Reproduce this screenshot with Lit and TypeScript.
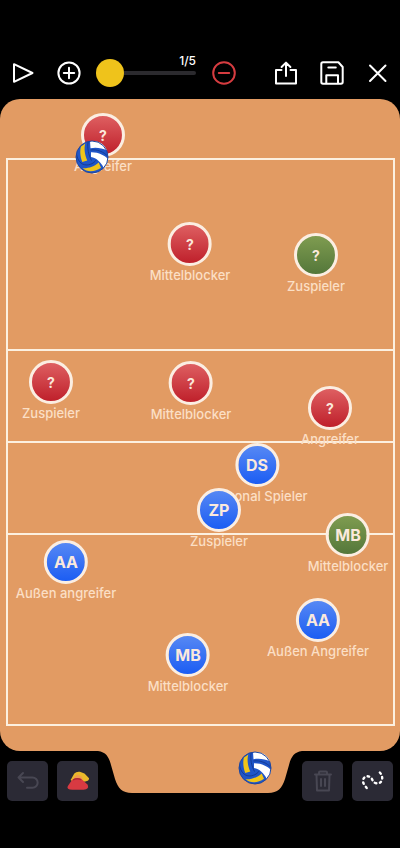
import { LitElement, html, css, svg } from "lit";
import { customElement, state } from "lit/decorators.js";
import { styleMap } from "lit/directives/style-map.js";

type Team = "red" | "green" | "blue";
interface Player { x: number; y: number; team: Team; tag: string; role: string; }

// Positions are given in board units; the board is 400 by 652 units.
const BOARD_W = 400;
const BOARD_H = 652;

const PLAYERS: Player[] = [
  { x: 103, y: 36, team: "red", tag: "?", role: "Angreifer" },
  { x: 190, y: 145, team: "red", tag: "?", role: "Mittelblocker" },
  { x: 316, y: 156, team: "green", tag: "?", role: "Zuspieler" },
  { x: 51, y: 283, team: "red", tag: "?", role: "Zuspieler" },
  { x: 191, y: 284, team: "red", tag: "?", role: "Mittelblocker" },
  { x: 330, y: 309, team: "red", tag: "?", role: "Angreifer" },
  { x: 257, y: 366, team: "blue", tag: "DS", role: "Diagonal Spieler" },
  { x: 219, y: 411, team: "blue", tag: "ZP", role: "Zuspieler" },
  { x: 348, y: 436, team: "green", tag: "MB", role: "Mittelblocker" },
  { x: 66, y: 463, team: "blue", tag: "AA", role: "Außen angreifer" },
  { x: 318, y: 521, team: "blue", tag: "AA", role: "Außen Angreifer" },
  { x: 188, y: 556, team: "blue", tag: "MB", role: "Mittelblocker" },
];

const BALLS = [{ x: 92, y: 58 }, { x: 255, y: 669 }];

const place = (p: { x: number; y: number }) =>
  styleMap({ left: `${(p.x / BOARD_W) * 100}%`, top: `${(p.y / BOARD_H) * 100}%` });

const icons = {
  play: svg`<path d="M3 3.2V20.8L21.5 12Z"/>`,
  add: svg`<circle cx="12" cy="12" r="10.6"/><path d="M12 6.8V17.2M6.8 12H17.2"/>`,
  remove: svg`<circle cx="12" cy="12" r="10.8"/><path d="M6.8 12H17.2"/>`,
  share: svg`<path d="M7.5 9H2V22.5H22V9H16.5M12 15V1.8M7.6 6L12 1.6L16.4 6"/>`,
  save: svg`<path d="M1.3 3Q1.3 1.3 3 1.3H18.4L22.7 6V21Q22.7 22.7 21 22.7H3Q1.3 22.7 1.3 21ZM6.3 22.5V14.2H18V22.5M8.3 6.4H15.8"/>`,
  close: svg`<path d="M4 4.5L19.5 20M19.5 4.5L4 20"/>`,
  undo: svg`<path d="M7 4L2.5 8.5L7 13M2.500 8.500H16.500A5 5 0 0 1 16.500 18.800H11"/>`,
  trash: svg`<path d="M5.500 6L6 21.500H18L18.500 6M4 5.500H20M8 5V3.500Q8 2.500 9 2.500H15Q16 2.500 16 3.500V5M10 10V17M14 10V17"/>`,
  route: svg`<path d="M5.700 19C4 17 2 14.500 2 12C2 8 6 6.500 8.500 7.700C12 9 11 13.500 15 14.200C19.500 15 21.300 12 21.200 9C21.100 6.500 20 4.500 18 2.700"
    stroke-width="2.400" stroke-dasharray="1.500 3.600"/>`,
};

const ball = svg`
  <circle cx="17" cy="17" r="16" fill="#1f55c8"/>
  <path d="M15 1.200C23 0 29.500 4 32 10.500C27 8 21 7 15.500 8.200Z" fill="#fff"/>
  <path d="M16 12.200C23.500 12 30 15.500 33 19C32.600 22.500 31 25.500 28.800 28C26 22 21.500 18 16 17Z" fill="#fff"/>
  <path d="M10.300 3.600C8.900 8 9.600 15 12.300 20.500L7.300 22C5 16.500 4.800 10 6 6.600Z" fill="#f0c419"/>
  <path d="M7.600 28.300C13 28.800 19.500 26.500 23.700 22.600L26 27.800C20.500 31.800 12.500 32.800 7.600 28.300Z" fill="#f0c419"/>
  <path d="M13.200 1.500C12 8 13.500 15 16.500 20.500M1.500 14C2.500 20 5.500 25 12 25C17 24.500 20 22 21 20M15.500 10C22 9 29 12 32.500 16" fill="none" stroke="#143b94" stroke-width="1"/>
  <circle cx="17" cy="17" r="16" fill="none" stroke="#1c469f" stroke-width="1"/>`;

@customElement("app-root")
export class AppRoot extends LitElement {
  @state() private frame = 1;

  static styles = css`
    :host {
      display: flex;
      flex-direction: column;
      min-height: 100vh;
      background: #000;
      color: #fff;
      font-family: Inter, "Liberation Sans", sans-serif;
    }
    button {
      appearance: none;
      border: 0;
      padding: 0;
      margin: 0;
      background: none;
      color: inherit;
      font: inherit;
      cursor: pointer;
    }
    svg { display: block; }
    .line-icon {
      width: 24px;
      height: 24px;
      fill: none;
      stroke: currentColor;
      stroke-width: 2;
      stroke-linecap: round;
      stroke-linejoin: round;
    }
    .toolbar {
      display: flex;
      align-items: center;
      padding: 61px 10px 14px 11px;
    }
    .group { display: flex; gap: 22px; }
    .files { margin-left: 38px; }
    .frames { position: relative; flex: 1; margin: 0 16px 0 15px; height: 24px; }
    .frames-count {
      position: absolute;
      right: 0;
      top: -8px;
      font-size: 12px;
      line-height: 16px;
      font-weight: 500;
    }
    .slider {
      appearance: none;
      display: block;
      width: 100%;
      height: 24px;
      margin: 0;
      background: none;
    }
    .slider::-webkit-slider-runnable-track {
      height: 4px;
      border-radius: 2px;
      background: #2b2a2e;
    }
    .slider::-webkit-slider-thumb {
      appearance: none;
      width: 28px;
      height: 28px;
      margin-top: -12px;
      border-radius: 50%;
      background: #efc31b;
    }
    .danger { color: #d63c40; }
    .board {
      position: relative;
      z-index: 1;
      flex: 1;
      display: flex;
      min-height: 560px;
      border-radius: 20px;
      background: #e29b63;
    }
    .court {
      flex: 1;
      display: grid;
      grid-template-rows: 189fr 92fr 92fr 191fr;
      margin: 59px 5px 25px 6px;
      border: 2px solid #fcf0e0;
    }
    .zone + .zone { border-top: 2px solid #fcf0e0; }
    .player {
      position: absolute;
      display: flex;
      flex-direction: column;
      align-items: center;
      gap: 1px;
      margin-top: -22px;
      transform: translateX(-50%);
      white-space: nowrap;
    }
    .disc {
      box-sizing: border-box;
      display: grid;
      place-items: center;
      width: 44px;
      height: 44px;
      border: 3px solid #fbeee2;
      border-radius: 50%;
      font-size: 16px;
      font-weight: 700;
      color: #fbe9dc;
    }
    .unknown { font-size: 14px; }
    .red { background: linear-gradient(#de5f61, #bf202b); }
    .green { background: linear-gradient(#7f9c50, #54773a); }
    .blue { background: linear-gradient(#5688f4, #1c5df3); }
    .role {
      font-size: 13px;
      line-height: 16px;
      font-weight: 500;
      color: #fbdfc5;
    }
    .ball {
      position: absolute;
      width: 34px;
      height: 34px;
      transform: translate(-50%, -50%);
    }
    .ball svg { width: 34px; height: 34px; }
    .dock {
      display: grid;
      grid-template-columns: 91px 1fr 91px;
      padding: 0 7px;
      height: 97px;
    }
    .tab { width: 100%; height: 42px; fill: #e29b63; }
    .tools {
      display: flex;
      justify-content: space-between;
      align-items: start;
      padding-top: 10px;
    }
    .tool {
      display: grid;
      place-items: center;
      width: 41px;
      height: 40px;
      border-radius: 5px;
      background: #2b2a35;
    }
    .muted { color: #484753; }
    .cones { width: 24px; height: 22px; }
  `;

  private icon(shape: unknown) {
    return html`<svg class="line-icon" viewBox="0 0 24 24" aria-hidden="true">${shape}</svg>`;
  }

  private onFrame(e: Event) {
    this.frame = Number((e.target as HTMLInputElement).value);
  }

  render() {
    return html`
      <header class="toolbar">
        <div class="group">
          <button aria-label="Abspielen">${this.icon(icons.play)}</button>
          <button aria-label="Schritt hinzufügen">${this.icon(icons.add)}</button>
        </div>
        <div class="frames">
          <input class="slider" id="frame" type="range" min="1" max="5" .value=${String(this.frame)}
            aria-label="Schritt" @input=${this.onFrame} />
          <output class="frames-count" for="frame">${this.frame}/5</output>
        </div>
        <button class="danger" aria-label="Schritt entfernen">${this.icon(icons.remove)}</button>
        <div class="group files">
          <button aria-label="Teilen">${this.icon(icons.share)}</button>
          <button aria-label="Speichern">${this.icon(icons.save)}</button>
          <button aria-label="Schließen">${this.icon(icons.close)}</button>
        </div>
      </header>

      <main class="board">
        <div class="court">
          <div class="zone"></div><div class="zone"></div>
          <div class="zone"></div><div class="zone"></div>
        </div>
        ${PLAYERS.map((p) => html`
          <button class="player" style=${place(p)}>
            <span class="disc ${p.team} ${p.tag === "?" ? "unknown" : ""}">${p.tag}</span>
            <span class="role">${p.role}</span>
          </button>`)}
        ${BALLS.map((b) => html`
          <button class="ball" aria-label="Ball" style=${place(b)}>
            <svg viewBox="0 0 34 34" aria-hidden="true">${ball}</svg>
          </button>`)}
      </main>

      <footer class="dock">
        <div class="tools">
          <button class="tool muted" aria-label="Rückgängig">${this.icon(icons.undo)}</button>
          <button class="tool" aria-label="Hütchen">
            <svg class="cones" viewBox="0 0 26 22" aria-hidden="true">
              <path d="M5 10L9 3Q11 .500 15 1L20 3L25 8Q25 11 21 11.500L9 13Z" fill="#eab92a"/>
              <path d="M9 7L12 4L17 6L18 10H8Z" fill="#f09a4c"/>
              <path d="M2 16.500L6.500 10Q11 6.500 17 9L23.500 15Q25.500 20 19 20.500H7Q0 20.500 2 16.500Z" fill="#d83a42"/>
              <path d="M7.500 9.800Q12 7.500 16.500 9.500" fill="none" stroke="#aa2735" stroke-width="1.500"/>
            </svg>
          </button>
        </div>
        <svg class="tab" viewBox="0 0 204 42" preserveAspectRatio="none" aria-hidden="true">
          <path d="M0 0C8 1 11 6 13 14L17 28C20 37 24 42 34 42H170C180 42 184 37 187 28L191 14C193 6 196 1 204 0Z"/>
        </svg>
        <div class="tools">
          <button class="tool muted" aria-label="Löschen">${this.icon(icons.trash)}</button>
          <button class="tool" aria-label="Laufweg zeichnen">${this.icon(icons.route)}</button>
        </div>
      </footer>
    `;
  }
}
